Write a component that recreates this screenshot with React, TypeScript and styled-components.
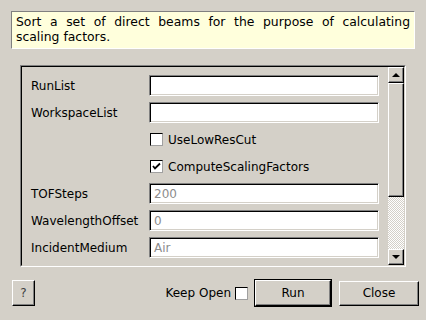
import styled, { createGlobalStyle } from 'styled-components';

const GlobalStyle = createGlobalStyle`
    html, body {
        margin: 0;
        padding: 0;
        background: #d4d0c8;
    }
    body {
        font-family: 'DejaVu Sans', 'Liberation Sans', sans-serif;
        font-size: 12px;
        color: #000;
    }
`;

const Dialog = styled.div`
    width: 426px;
    height: 320px;
    box-sizing: border-box;
    padding: 11px 11px 0 11px;
    display: flex;
    flex-direction: column;
    background: #d4d0c8;
    overflow: hidden;
`;

const Description = styled.div`
    height: 38px;
    box-sizing: border-box;
    padding: 2px 4px 0 4px;
    background: #ffffdc;
    border: 1px solid;
    border-color: #808080 #ffffff #ffffff #808080;
    font-size: 12.4px;
    line-height: 15px;
    text-align: justify;
`;

const FrameOuter = styled.div`
    margin: 16px 9px 0 9px;
    height: 202px;
    box-sizing: border-box;
    border: 1px solid;
    border-color: #808080 #ffffff #ffffff #808080;
`;

const FrameInner = styled.div`
    height: 100%;
    box-sizing: border-box;
    border: 1px solid;
    border-color: #000 #d4d0c8 #d4d0c8 #000;
    display: flex;
`;

const Content = styled.div`
    flex: 1;
    overflow: hidden;
    padding: 8px 0 0 9px;
    display: grid;
    grid-template-columns: 118px 230px;
    grid-auto-rows: 21px;
    row-gap: 6px;
    align-content: start;
`;

const Label = styled.div`
    display: flex;
    align-items: center;
    white-space: nowrap;
`;

const Field = styled.div<{ $muted?: boolean }>`
    box-sizing: border-box;
    height: 21px;
    background: #fff;
    border: 1px solid;
    border-color: #808080 #ffffff #ffffff #808080;
    box-shadow: inset 1px 1px 0 #000, inset -1px -1px 0 #d4d0c8;
    padding: 0 4px;
    display: flex;
    align-items: center;
    color: ${({ $muted }) => ($muted ? '#8c8c8c' : '#000')};
`;

const CheckRow = styled.label`
    grid-column: 2;
    display: flex;
    align-items: center;
    gap: 5px;
    padding-left: 1px;
`;

const Box = styled.span`
    width: 13px;
    height: 13px;
    box-sizing: border-box;
    background: #fff;
    border: 1px solid;
    border-color: #000 #a0a0a0 #a0a0a0 #000;
    display: inline-flex;
    align-items: center;
    justify-content: center;
    flex: none;
`;

const Scrollbar = styled.div`
    width: 16px;
    display: flex;
    flex-direction: column;
`;

const Raised = styled.div`
    box-sizing: border-box;
    background: #d4d0c8;
    border: 1px solid;
    border-color: #ffffff #000 #000 #ffffff;
    box-shadow: inset -1px -1px 0 #808080;
`;

const ArrowButton = styled(Raised)`
    height: 16px;
    display: flex;
    align-items: center;
    justify-content: center;
`;

const Arrow = styled.span<{ $down?: boolean }>`
    width: 0;
    height: 0;
    border-left: 4px solid transparent;
    border-right: 4px solid transparent;
    ${({ $down }) => ($down ? 'border-top: 4px solid #000;' : 'border-bottom: 4px solid #000;')}
`;

const Thumb = styled(Raised)`
    height: 114px;
`;

const Trough = styled.div`
    flex: 1;
    background-color: #ffffff;
    background-image: repeating-conic-gradient(#d4d0c8 0 25%, #ffffff 0 50%);
    background-size: 2px 2px;
`;

const BottomBar = styled.div`
    flex: 1;
    display: flex;
    align-items: center;
    margin: 0 -4px 0 1px;
    padding-bottom: 1px;
`;

const Button = styled(Raised)<{ $w: number; $h: number }>`
    width: ${({ $w }) => $w}px;
    height: ${({ $h }) => $h}px;
    display: flex;
    align-items: center;
    justify-content: center;
`;

const DefaultFrame = styled.div`
    border: 1px solid #000;
    margin-left: 6px;
    display: flex;
`;

const Spacer = styled.div`
    flex: 1;
`;

const KeepOpen = styled.label`
    display: flex;
    align-items: center;
    gap: 4px;
`;

const HelpMark = styled.span`
    color: #404040;
`;

function Check() {
    return (
        <svg width="9" height="9" viewBox="0 0 9 9">
            <path d="M1 4 L3 6.5 L8 1.5" stroke="#000" strokeWidth="1.8" fill="none" />
        </svg>
    );
}

export default function App() {
    return (
        <>
            <GlobalStyle />
            <Dialog>
                <Description>
                    Sort a set of direct beams for the purpose of calculating scaling factors.
                </Description>
                <FrameOuter>
                    <FrameInner>
                        <Content>
                            <Label>RunList</Label>
                            <Field />
                            <Label>WorkspaceList</Label>
                            <Field />
                            <CheckRow>
                                <Box />
                                UseLowResCut
                            </CheckRow>
                            <CheckRow>
                                <Box><Check /></Box>
                                ComputeScalingFactors
                            </CheckRow>
                            <Label>TOFSteps</Label>
                            <Field $muted>200</Field>
                            <Label>WavelengthOffset</Label>
                            <Field $muted>0</Field>
                            <Label>IncidentMedium</Label>
                            <Field $muted>Air</Field>
                        </Content>
                        <Scrollbar>
                            <ArrowButton><Arrow /></ArrowButton>
                            <Thumb />
                            <Trough />
                            <ArrowButton><Arrow $down /></ArrowButton>
                        </Scrollbar>
                    </FrameInner>
                </FrameOuter>
                <BottomBar>
                    <Button $w={23} $h={26}><HelpMark>?</HelpMark></Button>
                    <Spacer />
                    <KeepOpen>
                        Keep Open
                        <Box />
                    </KeepOpen>
                    <DefaultFrame>
                        <Button $w={76} $h={26}>Run</Button>
                    </DefaultFrame>
                    <Button $w={80} $h={25} style={{ marginLeft: 7 }}>Close</Button>
                </BottomBar>
            </Dialog>
        </>
    );
}
